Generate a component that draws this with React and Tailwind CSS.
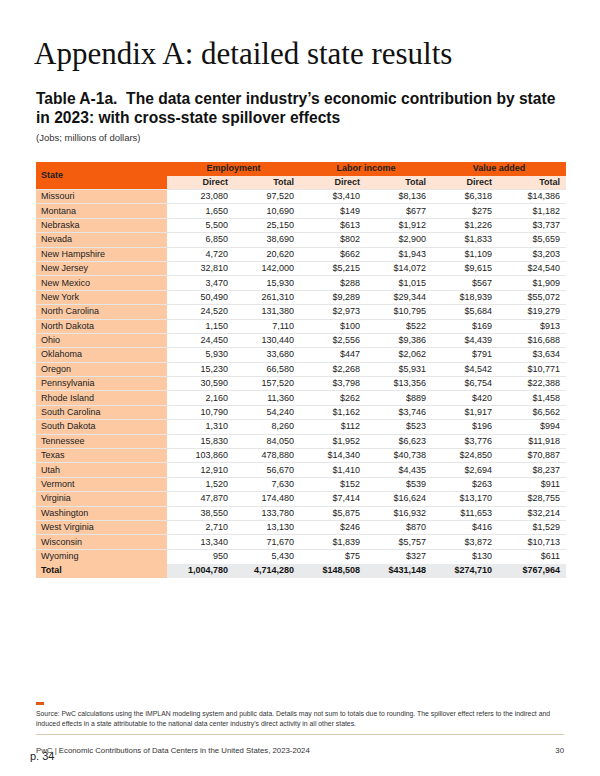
const rows = [
  ["Missouri", "23,080", "97,520", "$3,410", "$8,136", "$6,318", "$14,386"],
  ["Montana", "1,650", "10,690", "$149", "$677", "$275", "$1,182"],
  ["Nebraska", "5,500", "25,150", "$613", "$1,912", "$1,226", "$3,737"],
  ["Nevada", "6,850", "38,690", "$802", "$2,900", "$1,833", "$5,659"],
  ["New Hampshire", "4,720", "20,620", "$662", "$1,943", "$1,109", "$3,203"],
  ["New Jersey", "32,810", "142,000", "$5,215", "$14,072", "$9,615", "$24,540"],
  ["New Mexico", "3,470", "15,930", "$288", "$1,015", "$567", "$1,909"],
  ["New York", "50,490", "261,310", "$9,289", "$29,344", "$18,939", "$55,072"],
  ["North Carolina", "24,520", "131,380", "$2,973", "$10,795", "$5,684", "$19,279"],
  ["North Dakota", "1,150", "7,110", "$100", "$522", "$169", "$913"],
  ["Ohio", "24,450", "130,440", "$2,556", "$9,386", "$4,439", "$16,688"],
  ["Oklahoma", "5,930", "33,680", "$447", "$2,062", "$791", "$3,634"],
  ["Oregon", "15,230", "66,580", "$2,268", "$5,931", "$4,542", "$10,771"],
  ["Pennsylvania", "30,590", "157,520", "$3,798", "$13,356", "$6,754", "$22,388"],
  ["Rhode Island", "2,160", "11,360", "$262", "$889", "$420", "$1,458"],
  ["South Carolina", "10,790", "54,240", "$1,162", "$3,746", "$1,917", "$6,562"],
  ["South Dakota", "1,310", "8,260", "$112", "$523", "$196", "$994"],
  ["Tennessee", "15,830", "84,050", "$1,952", "$6,623", "$3,776", "$11,918"],
  ["Texas", "103,860", "478,880", "$14,340", "$40,738", "$24,850", "$70,887"],
  ["Utah", "12,910", "56,670", "$1,410", "$4,435", "$2,694", "$8,237"],
  ["Vermont", "1,520", "7,630", "$152", "$539", "$263", "$911"],
  ["Virginia", "47,870", "174,480", "$7,414", "$16,624", "$13,170", "$28,755"],
  ["Washington", "38,550", "133,780", "$5,875", "$16,932", "$11,653", "$32,214"],
  ["West Virginia", "2,710", "13,130", "$246", "$870", "$416", "$1,529"],
  ["Wisconsin", "13,340", "71,670", "$1,839", "$5,757", "$3,872", "$10,713"],
  ["Wyoming", "950", "5,430", "$75", "$327", "$130", "$611"],
];

const total = ["Total", "1,004,780", "4,714,280", "$148,508", "$431,148", "$274,710", "$767,964"];

export default function App() {
  return (
    <div className="w-[600px] h-[776px] bg-white text-[#1a1a1a] font-['Liberation_Sans',Arial,sans-serif] px-[36px] flex flex-col">
      <h1 className="mt-[38px] font-['Liberation_Serif','Times_New_Roman',serif] text-[31px] leading-none text-[#111] -ml-[2px]">
        Appendix A: detailed state results
      </h1>
      <h2 className="mt-[20px] text-[15.6px] font-bold leading-[19px] text-[#111]">
        Table A-1a.&nbsp; The data center industry’s economic contribution by state in 2023: with cross-state spillover effects
      </h2>
      <p className="mt-[6px] text-[9.5px] leading-none text-[#333]">(Jobs; millions of dollars)</p>

      <table className="mt-[19px] w-[530px] border-collapse text-[9px] leading-none table-fixed">
        <colgroup>
          <col className="w-[131px]" />
          <col className="w-[67px]" />
          <col className="w-[66px]" />
          <col className="w-[66px]" />
          <col className="w-[66px]" />
          <col className="w-[66px]" />
          <col className="w-[68px]" />
        </colgroup>
        <thead>
          <tr className="h-[14px] bg-[#f45c0e] font-bold text-[#222]">
            <th rowSpan={2} className="text-left pl-[5px] align-middle">State</th>
            <th colSpan={2} className="text-center">Employment</th>
            <th colSpan={2} className="text-center">Labor income</th>
            <th colSpan={2} className="text-center">Value added</th>
          </tr>
          <tr className="h-[14px] bg-[#fde4d4] font-bold text-[#222]">
            <th className="text-right pr-[6px]">Direct</th>
            <th className="text-right pr-[6px]">Total</th>
            <th className="text-right pr-[6px]">Direct</th>
            <th className="text-right pr-[6px]">Total</th>
            <th className="text-right pr-[6px]">Direct</th>
            <th className="text-right pr-[6px]">Total</th>
          </tr>
        </thead>
        <tbody>
          {rows.map((r) => (
            <tr key={r[0]} className="h-[14.4px] border-t border-[#e6e6e6]">
              <td className="bg-[#fdc9a2] pl-[5px] text-[#222]">{r[0]}</td>
              {r.slice(1).map((v, i) => (
                <td key={i} className="text-right pr-[6px] text-[#222]">{v}</td>
              ))}
            </tr>
          ))}
          <tr className="h-[14.4px] font-bold">
            <td className="bg-[#fdc9a2] pl-[5px] text-[#111]">{total[0]}</td>
            {total.slice(1).map((v, i) => (
              <td key={i} className="bg-[#e9eaeb] text-right pr-[6px] text-[#111]">{v}</td>
            ))}
          </tr>
        </tbody>
      </table>

      <div className="mt-auto">
        <div className="w-[8px] h-[3px] bg-[#e0591a]" />
        <p className="mt-[4px] text-[6.85px] leading-[10px] text-[#333]">
          Source: PwC calculations using the IMPLAN modeling system and public data. Details may not sum to totals due to rounding. The spillover effect refers to the indirect and induced effects in a state attributable to the national data center industry's direct activity in all other states.
        </p>
        <div className="mt-[5px] h-px bg-[#d9cbb0]" />
        <div className="mt-[12px] flex justify-between text-[7.8px] leading-none text-[#333]">
          <div className="relative">
            <span>PwC | Economic Contributions of Data Centers in the United States, 2023-2024</span>
            <span className="absolute left-[-6px] top-[4px] text-[11px] text-[#222]">p. 34</span>
          </div>
          <span>30</span>
        </div>
        <div className="h-[21px]" />
      </div>
    </div>
  );
}
